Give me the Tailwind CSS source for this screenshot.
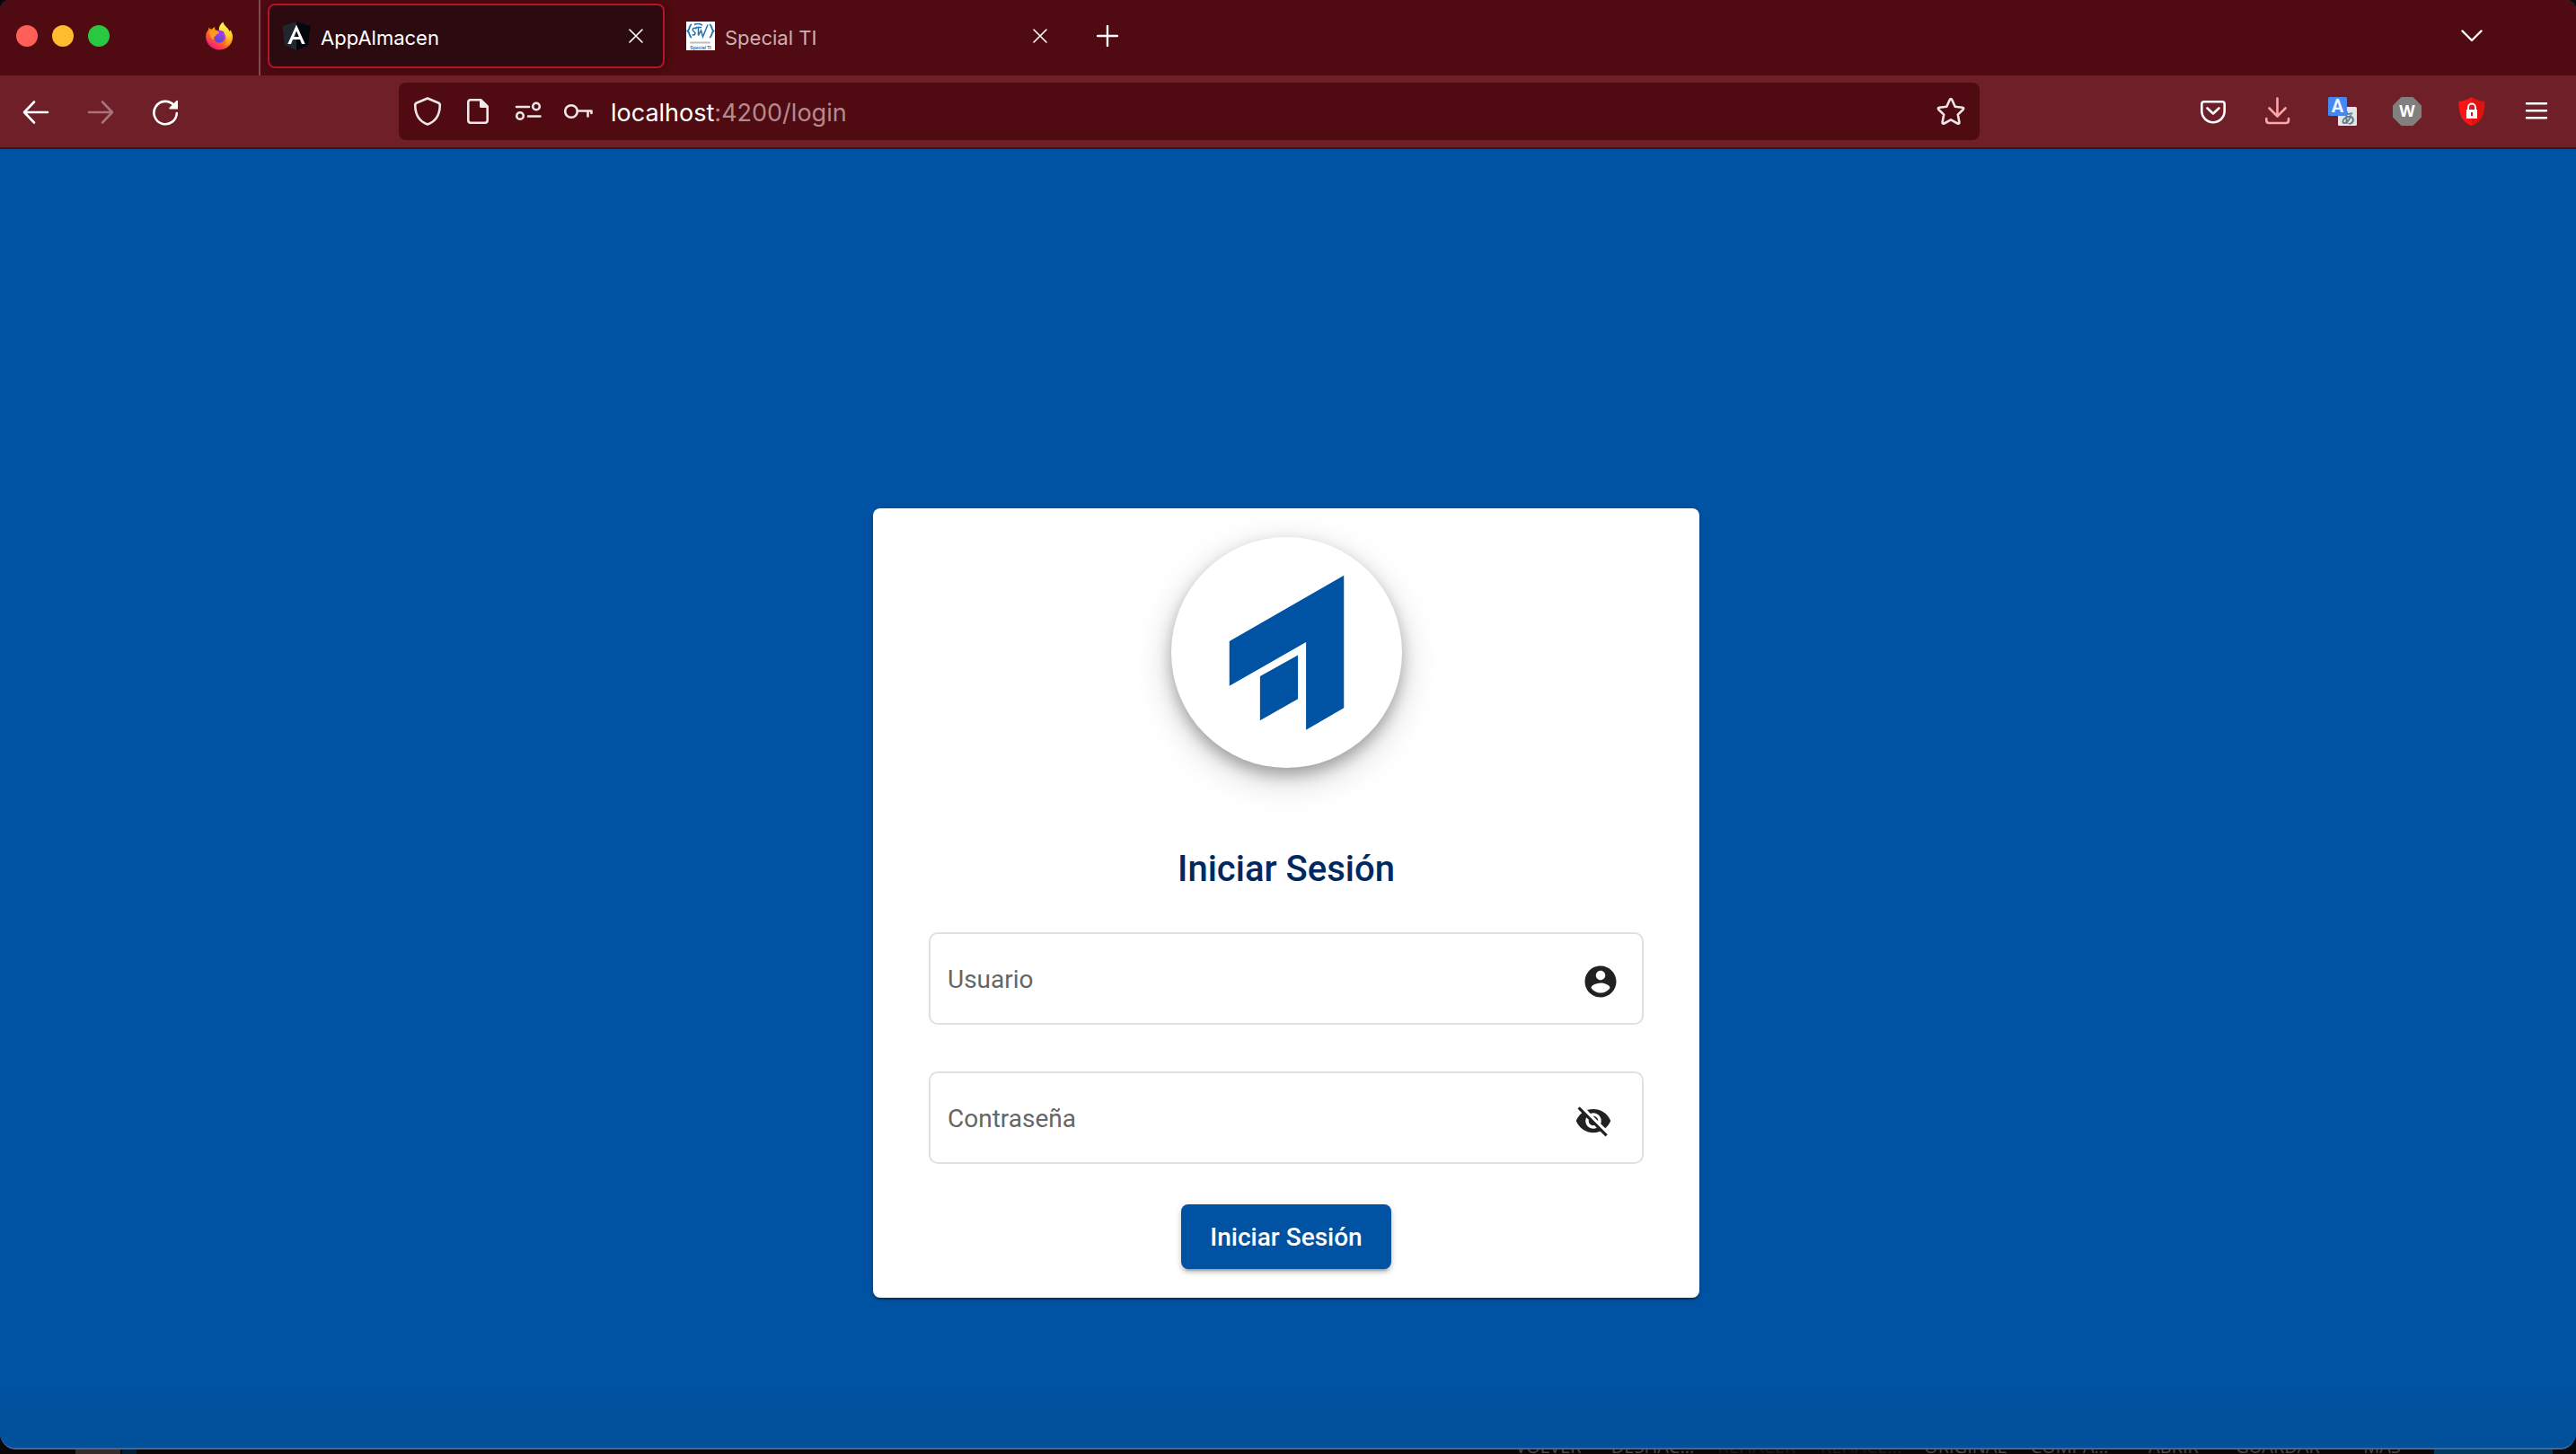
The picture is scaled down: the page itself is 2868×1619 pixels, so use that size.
<!DOCTYPE html>
<html lang="es">
<head>
<meta charset="utf-8">
<title>AppAlmacen</title>
<script src="https://cdn.jsdelivr.net/npm/@tailwindcss/browser@4"></script>
</head>
<body class="flex min-h-screen flex-col bg-[#0a0708] font-['Inter',sans-serif]">

<!-- Browser window -->
<div class="flex flex-1 flex-col overflow-hidden rounded-t-[10px] rounded-b-[18px] border-b-2 border-[#3a6ba8] bg-[#0052a2]">

  <!-- Tab strip -->
  <header class="flex h-[84px] items-center bg-[#500a11] text-white">
    <div class="flex w-[290px] items-center self-stretch border-r-2 border-[#7f4a50] pb-1 pl-[18px]">
      <div class="flex flex-1 gap-4">
        <button aria-label="Cerrar ventana" class="size-6 rounded-full bg-[#ff5f57]"></button>
        <button aria-label="Minimizar" class="size-6 rounded-full bg-[#febc2e]"></button>
        <button aria-label="Maximizar" class="size-6 rounded-full bg-[#28c840]"></button>
      </div>
      <button aria-label="Firefox View" class="mr-7">
        <svg class="size-8" viewBox="0 0 32 32">
          <defs>
            <linearGradient id="ffBody" x1="0.85" y1="0.1" x2="0.25" y2="0.95"><stop offset="0" stop-color="#fff44f"/><stop offset=".4" stop-color="#ff980e"/><stop offset=".75" stop-color="#ff4a3c"/><stop offset="1" stop-color="#f0148c"/></linearGradient>
            <linearGradient id="ffGlobe" x1="0.7" y1="0" x2="0.3" y2="1"><stop offset="0" stop-color="#b53bf0"/><stop offset="1" stop-color="#5148d2"/></linearGradient>
            <linearGradient id="ffFlame" x1="0.5" y1="0" x2="0.6" y2="1"><stop offset="0" stop-color="#fff44f"/><stop offset=".6" stop-color="#ffd030"/><stop offset="1" stop-color="#ff8a16"/></linearGradient>
          </defs>
          <path fill="url(#ffBody)" d="M4.500 6.500C5.500 8 6.500 8.500 8 8.500C9 7 10 6.500 11.500 6C10.800 7.500 11 8.500 12 9.500L16 10L20 3C22 5 24 7 25 9C27 9.500 30 12 31 16C31.500 25 25 31.500 16.500 31.500C8 31.500 1.500 25 1.200 17.500C1 14 2 11 4 9.500Z"/>
          <path fill="url(#ffFlame)" d="M20.500 0.500C20.800 3 23 5 25.500 7.500C26.500 8.700 27 10 27.200 11.500C28 11 28.500 10 28.600 9.300C30.500 12.500 31.300 16 30.500 20C29 25 25.500 27 21.500 26.500C25 24 25.500 19 23 14.500C21 12 17 11.500 15.800 9.500C15.400 6 17.500 2.500 20.500 .5Z"/>
          <circle cx="16.300" cy="17" r="6.600" fill="url(#ffGlobe)"/>
          <path fill="#a033e8" d="M13 11c2-2 7-1.500 9 1.500l-4 1z"/>
          <path fill="#ff9a1c" d="M5 12c2-2 5-2.500 7.500-1.500c1.500 0 3 .5 3.500 1.500c0 1.500-2.500 2-3.500 2.800c.3 1-.8 1.800-2 2.200c-.5 1.500 0 2.500.7 3.500C7.500 19.500 5.500 17 5 12z"/>
        </svg>
      </button>
    </div>

    <div class="flex flex-1 items-center pb-1">
      <div class="ml-2 flex h-[72px] w-[442px] items-center rounded-lg border-2 border-[#b71426] bg-[#2b0a10] pr-[22px] pl-3.5 shadow-[0_0_8px_rgba(0,0,0,0.4)]">
        <svg class="size-8" viewBox="0 0 32 32">
          <path fill="#20272f" d="M16 0L.5 5L3 26L16 32Z"/>
          <path fill="#02060d" d="M16 0L31.500 5L29 26L16 32Z"/>
          <path fill="#fff" fill-rule="evenodd" d="M16 3.500L25.700 25H22L20 20H12L10 25H6.300ZM16 10.500L13.200 17H18.800Z"/>
        </svg>
        <span class="ml-[11px] flex-1 pt-[3px] text-[22px] leading-8">AppAlmacen</span>
        <button aria-label="Cerrar AppAlmacen">
          <svg class="size-4" viewBox="0 0 16 16" fill="none" stroke="#fff" stroke-width="1.600" stroke-linecap="round"><path d="M1 1L15 15M15 1L1 15"/></svg>
        </button>
      </div>

      <div class="ml-6 flex h-[72px] w-[402px] items-center">
        <svg class="size-8" viewBox="0 0 32 32">
          <rect width="32" height="32" fill="#fff"/>
          <g fill="none" stroke="#2373ae" stroke-width="1.800"><path d="M6 3C2.500 5 4.500 8.500 1.500 10.500C4.500 12.500 2.500 16 6 18M26 3C29.500 5 27.500 8.500 30.500 10.500C27.500 12.500 29.500 16 26 18"/><path d="M11.500 8C8 6 5.500 9 8.500 11C11.500 13 9 16.500 6.500 14.500M9 3.500Q13 1.500 18 4M10.500 6.500H17M13.500 7V15.500L16.500 10L18.500 17L24 3.500" stroke-width="1.500"/></g>
          <rect x="4" y="22.500" width="23" height="2" rx="1" fill="#bcbcbc"/>
          <text x="16" y="31" text-anchor="middle" font-family="Liberation Sans" font-weight="700" font-size="5" fill="#2373ae">Special TI</text>
        </svg>
        <span class="ml-[11px] flex-1 pt-[3px] text-[22px] leading-8 text-[#cbb1b4]">Special TI</span>
        <button aria-label="Cerrar Special TI">
          <svg class="size-4" viewBox="0 0 16 16" fill="none" stroke="#fff" stroke-width="1.600" stroke-linecap="round"><path d="M1 1L15 15M15 1L1 15"/></svg>
        </button>
      </div>
      <button aria-label="Nueva pestaña" class="ml-[55px]">
        <svg class="size-6" viewBox="0 0 24 24" fill="none" stroke="#fff" stroke-width="2.400" stroke-linecap="round"><path d="M12 1V23M1 12H23"/></svg>
      </button>
      <button aria-label="Lista de pestañas" class="mr-[104px] ml-auto">
        <svg class="h-3.5 w-6" viewBox="0 0 24 14" fill="none" stroke="#fff" stroke-width="2.400" stroke-linecap="round" stroke-linejoin="round"><path d="M1.500 1.500L12 12L22.500 1.500"/></svg>
      </button>
    </div>
  </header>

  <!-- Navigation bar -->
  <nav class="flex h-[82px] items-center border-b-2 border-[#500a11] bg-[#6e1f28] text-white">
    <div class="flex w-[444px] gap-10 pl-6">
      <button aria-label="Atrás"><svg class="size-8" viewBox="0 0 32 32" fill="none" stroke="#fff" stroke-width="2.600" stroke-linecap="round" stroke-linejoin="round"><path d="M29 17H3.500M14 5.500L3 17L14 28.500"/></svg></button>
      <button aria-label="Adelante"><svg class="size-8" viewBox="0 0 32 32" fill="none" stroke="#a8747a" stroke-width="2.600" stroke-linecap="round" stroke-linejoin="round"><path d="M3 17H28.500M18 5.500L29 17L18 28.500"/></svg></button>
      <button aria-label="Recargar"><svg class="size-8" viewBox="0 0 32 32"><path fill="none" stroke="#fff" stroke-width="2.600" stroke-linecap="round" d="M28.800 18A12.700 12.700 0 1 1 25.500 9"/><path fill="#fff" d="M30 4.500V13.500H21Q20 13 20.500 12L28.500 4Q29.500 3.500 30 4.500Z"/></svg></button>
    </div>

    <div class="flex h-16 flex-1 items-center rounded-lg bg-[#500a11] pr-4 pl-4">
      <button aria-label="Protección"><svg class="size-8" viewBox="0 0 32 32" fill="none" stroke="#f0e6e7" stroke-width="2.600" stroke-linejoin="round"><path d="M16 1.500L28 6.500Q30 7.500 29.800 9.500C29.500 19 26 27 16 30.500C6 27 2.500 19 2.200 9.500Q2 7.500 4 6.500Z"/></svg></button>
      <button aria-label="Información del sitio" class="ml-6"><svg class="size-8" viewBox="0 0 32 32"><path fill="none" stroke="#f0e6e7" stroke-width="2.600" stroke-linejoin="round" d="M8 3.300H19.500L26.700 10.500V26Q26.700 28.700 24 28.700H8Q5.300 28.700 5.300 26V6Q5.300 3.300 8 3.300Z"/><path fill="#f0e6e7" d="M18 2V10.500Q18 12 19.500 12H28Z"/></svg></button>
      <button aria-label="Permisos" class="ml-6"><svg class="size-8" viewBox="0 0 32 32" fill="none" stroke="#f0e6e7" stroke-width="2.600" stroke-linecap="round"><path d="M3 11H17M16 21.500H29.500"/><circle cx="25" cy="10.500" r="3.800"/><circle cx="7" cy="21" r="3.800"/></svg></button>
      <button aria-label="Contraseñas guardadas" class="ml-6"><svg class="size-8" viewBox="0 0 32 32" fill="none" stroke="#f0e6e7" stroke-width="2.600" stroke-linecap="round" stroke-linejoin="round"><circle cx="8" cy="16" r="6.800"/><path d="M15 15.500H30.500V18M26.500 16V21.500"/></svg></button>
      <label for="url" class="ml-5 pt-[3px] text-[27px] leading-9 text-[#b58a8e]"><span class="text-white">localhost</span>:4200/login</label>
      <input id="url" class="min-w-0 flex-1 bg-transparent text-[27px] outline-none">
      <button aria-label="Añadir marcador"><svg class="size-8" viewBox="0 0 32 32" fill="none" stroke="#f0e6e7" stroke-width="2.600" stroke-linejoin="round"><path d="M14.700 3.200Q16 1 17.300 3.200L20.700 10.800L28.800 11.800Q31 12.200 29.600 14L23.800 19.600L25.400 28Q25.600 30.300 23.500 29.500L16 25.300L8.500 29.500Q6.400 30.300 6.600 28L8.200 19.600L2.400 14Q1 12.200 3.200 11.800L11.300 10.800Z"/></svg></button>
    </div>

    <div class="flex w-[664px] justify-end gap-10 pr-7">
      <button aria-label="Pocket"><svg class="size-8" viewBox="0 0 32 32" fill="none" stroke="#fff" stroke-width="2.600" stroke-linecap="round" stroke-linejoin="round"><path d="M6 5.300H26Q28.700 5.300 28.700 8V15.500A12.700 12.700 0 0 1 3.300 15.500V8Q3.300 5.300 6 5.300ZM9.500 12.500L16 18.500L22.500 12.500"/></svg></button>
      <button aria-label="Descargas"><svg class="size-8" viewBox="0 0 32 32" fill="none" stroke="#ffa5a8" stroke-width="2.600" stroke-linecap="round" stroke-linejoin="round"><path d="M15.500 1.500V21M6.500 12.500L15.500 21.500L24.500 12.500M3.300 24V26Q3.300 29 6.300 29H25Q28 29 28 26V24"/></svg></button>
      <button aria-label="Traducir"><svg class="size-8" viewBox="0 0 32 32"><rect x="11" y="11" width="21" height="21" rx="1.500" fill="#e4e6e6"/><text x="22" y="29" text-anchor="middle" font-family="Noto Sans CJK JP" font-weight="700" font-size="16" fill="#607d8b">あ</text><rect width="21" height="21" rx="1.500" fill="#4688f1"/><text x="10.500" y="17" text-anchor="middle" font-family="Roboto" font-weight="700" font-size="20" fill="#eef3fd">A</text></svg></button>
      <button aria-label="Extensión W"><svg class="size-8" viewBox="0 0 32 32"><path fill="#808080" d="M9.500 0H22.500L32 9.500V22.500L22.500 32H9.500L0 22.500V9.500Z"/><text x="16" y="22" text-anchor="middle" font-family="Open Sans" font-weight="700" font-size="18" fill="#fff">W</text></svg></button>
      <button aria-label="Bloqueador"><svg class="size-8" viewBox="0 0 32 32"><path fill="#fa1414" d="M16 0Q9 4.500 1.500 5C1.500 17 3 27 16 32Z"/><path fill="#df1212" d="M16 0Q23 4.500 30.500 5C30.500 17 29 27 16 32Z"/><rect x="10" y="14" width="12" height="10" fill="#fff"/><path fill="none" stroke="#fff" stroke-width="2" d="M12 15V11.500A4 4 0 0 1 20 11.500V15"/><path fill="#e01010" d="M15 17H17V21H15Z"/></svg></button>
      <button aria-label="Menú"><svg class="size-8" viewBox="0 0 32 32" fill="none" stroke="#fff" stroke-width="2.400" stroke-linecap="round"><path d="M5 7.300H27M5 15.300H27M5 23.300H27"/></svg></button>
    </div>
  </nav>

  <!-- Login page -->
  <main class="flex flex-1 flex-col items-center bg-linear-to-b from-[#0052a2] from-95% to-[#02509a] pt-[400px] pr-1 font-['Roboto',sans-serif]">
    <form class="flex w-[920px] flex-col items-center rounded-lg bg-white px-[62px] py-8 shadow-[0_4px_2px_-2px_rgba(0,0,0,0.2),0_2px_2px_rgba(0,0,0,0.14),0_2px_6px_rgba(0,0,0,0.12)]">
      <svg class="size-[257px] rounded-full bg-white shadow-[0_8px_16px_rgba(0,0,0,0.26),0_12px_40px_rgba(0,0,0,0.2)]" viewBox="0 0 256 256" fill="#0052a2">
        <path d="M191.500 42.500V189.500L149.500 214V116.500L64.500 165V115.500Z"/>
        <path d="M140.500 131V179.500L98.500 203.500V154.500Z"/>
      </svg>
      <h1 class="mt-[89px] text-[40px] leading-12 font-medium text-[#002960]">Iniciar Sesión</h1>
      <div class="mt-[46px] flex h-[103px] w-full items-center rounded-[10px] border-2 border-[#e0e0e0] pr-[25px] pl-[19px]">
        <label for="user" class="pt-0.5 text-[28px] leading-8 text-[#666]">Usuario</label>
        <input id="user" type="text" class="min-w-0 flex-1 text-[28px] outline-none">
        <svg class="mt-[6px] size-[42px]" viewBox="0 0 24 24" fill="#212121"><path d="M12 2C6.480 2 2 6.480 2 12s4.480 10 10 10 10-4.480 10-10S17.520 2 12 2zm0 3c1.660 0 3 1.340 3 3s-1.340 3-3 3-3-1.340-3-3 1.340-3 3-3zm0 14.200c-2.500 0-4.710-1.280-6-3.220.03-1.990 4-3.080 6-3.080 1.990 0 5.970 1.090 6 3.080-1.290 1.940-3.500 3.220-6 3.220z"/></svg>
      </div>
      <div class="mt-[52px] flex h-[103px] w-full items-center rounded-[10px] border-2 border-[#e0e0e0] pr-[33px] pl-[19px]">
        <label for="pass" class="pt-0.5 text-[28px] leading-8 text-[#666]">Contraseña</label>
        <input id="pass" type="password" class="min-w-0 flex-1 text-[28px] outline-none">
        <button type="button" aria-label="Mostrar contraseña" class="mt-[6px]"><svg class="size-[42px]" viewBox="0 0 24 24" fill="#212121"><path d="M12 7c2.760 0 5 2.240 5 5 0 .65-.13 1.260-.36 1.830l2.920 2.920c1.510-1.260 2.700-2.890 3.430-4.750-1.730-4.390-6-7.500-11-7.500-1.400 0-2.740.25-3.980.7l2.160 2.160C10.740 7.130 11.350 7 12 7zM2 4.270l2.280 2.280.46.46C3.080 8.300 1.780 10.020 1 12c1.730 4.390 6 7.500 11 7.500 1.550 0 3.030-.3 4.380-.84l.42.42L19.730 22 21 20.730 3.270 3 2 4.270zM7.530 9.800l1.550 1.550c-.05.21-.08.43-.08.65 0 1.660 1.340 3 3 3 .22 0 .44-.03.65-.08l1.550 1.550c-.67.33-1.410.53-2.200.53-2.760 0-5-2.240-5-5 0-.79.2-1.530.53-2.200zm4.310-.78l3.150 3.150.02-.16c0-1.660-1.340-3-3-3l-.17.010z"/></svg></button>
      </div>
      <button type="submit" class="mt-[45px] h-[72px] rounded-lg bg-[#0052a2] px-8 pt-0.5 text-[28px] leading-8 font-medium text-white shadow-[0_6px_2px_-4px_rgba(0,0,0,0.2),0_4px_4px_rgba(0,0,0,0.14),0_2px_10px_rgba(0,0,0,0.12)]">Iniciar Sesión</button>
    </form>
  </main>
</div>

<!-- Toolbar of the window behind, mostly covered -->
<footer class="flex h-[5px] items-end overflow-hidden pr-[26px] text-center font-['Open_Sans',sans-serif] text-[20px] leading-4 text-[#4a4a4a]">
  <div class="ml-[84px] h-full w-[50px] bg-[#352c2d]"></div>
  <div class="ml-0.5 h-full w-4 bg-[#021d33]"></div>
  <span class="ml-auto w-[116px]">VOLVER</span>
  <span class="w-[116px]">DESHAC...</span>
  <span class="w-[116px] text-[#1e1c1c]">REHACER</span>
  <span class="w-[116px] text-[#1e1c1c]">REHACE...</span>
  <span class="w-[116px]">ORIGINAL</span>
  <span class="w-[116px]">COMPA...</span>
  <span class="w-[116px]">ABRIR</span>
  <span class="w-[116px]">GUARDAR</span>
  <span class="w-[116px]">MÁS</span>
  <div class="h-full w-[132px] bg-[#033a61]"></div>
</footer>
</body>
</html>
